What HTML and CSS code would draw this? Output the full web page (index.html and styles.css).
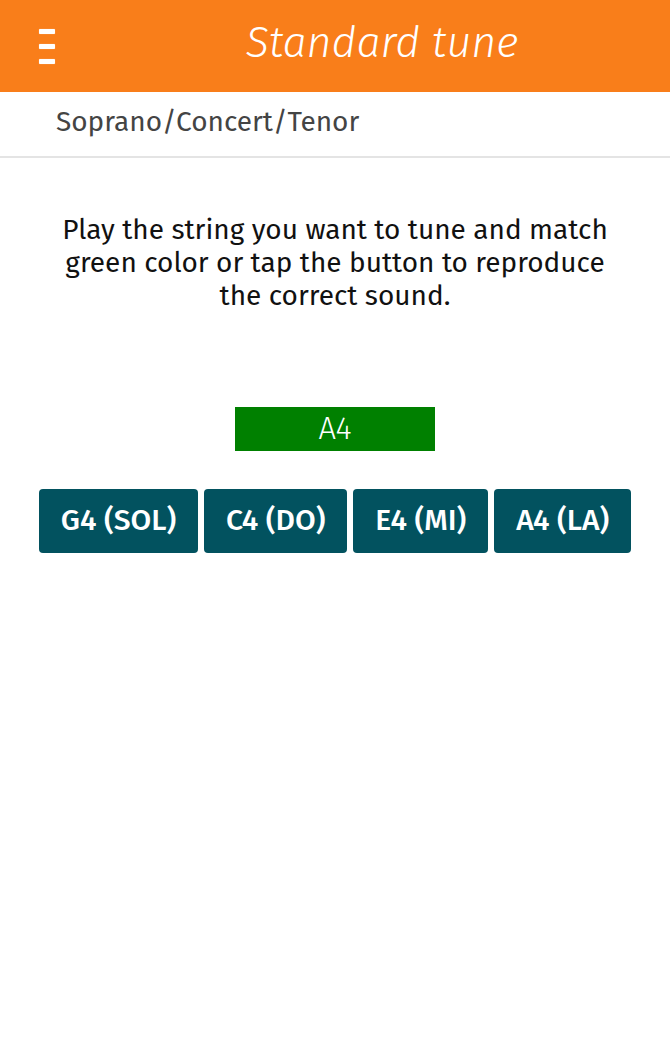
FILE: index.html
```html
<!DOCTYPE html>
<html lang="en">
<head>
<meta charset="utf-8">
<title>Standard tune</title>
<link rel="stylesheet" href="styles.css">
</head>
<body>
<header class="topbar">
  <button class="menu" aria-label="Menu">
    <span class="bar"></span><span class="bar"></span><span class="bar"></span>
  </button>
  <h1 class="title">Standard tune</h1>
</header>
<div class="subbar">Soprano/Concert/Tenor</div>
<main class="content">
  <p class="hint">Play the string you want to tune and match green color or tap the button to reproduce the correct sound.</p>
  <div class="note-wrap"><div class="note">A4</div></div>
  <div class="strings">
    <button class="string">G4 (SOL)</button>
    <button class="string">C4 (DO)</button>
    <button class="string">E4 (MI)</button>
    <button class="string">A4 (LA)</button>
  </div>
</main>
</body>
</html>
```
FILE: styles.css
```css
* { box-sizing: border-box; }
html, body { margin: 0; padding: 0; background: #fff; }
body { font-family: "Fira Sans", "Open Sans", "Noto Sans", sans-serif; color: #111; }

.topbar {
  height: 92px;
  background: #f97e1a;
  display: flex;
  align-items: center;
}
.menu {
  width: 94px;
  height: 92px;
  border: 0;
  background: transparent;
  padding: 0 0 0 39px;
  display: flex;
  flex-direction: column;
  justify-content: center;
  gap: 10px;
}
.bar { display: block; width: 16px; height: 5px; background: #fff; border-radius: 1px; box-shadow: 0 0 1px rgba(255,255,255,0.6); }
.title {
  margin: -7px 0 0;
  flex: 1;
  text-align: center;
  color: #fff;
  font-weight: 300;
  font-style: italic;
  font-size: 43px;
}

.subbar {
  height: 66px;
  border-bottom: 2px solid #e4e4e4;
  padding: 0 0 5px 56px;
  display: flex;
  align-items: center;
  font-size: 28px;
  color: #444;
}

.content { padding: 0 50px; }
.hint {
  margin: 55px 0 0;
  text-align: center;
  font-size: 28px;
  line-height: 33px;
  color: #111;
}
.note-wrap { display: flex; justify-content: center; margin-top: 95px; }
.note {
  width: 200px;
  height: 44px;
  background: #008000;
  color: #fff;
  font-weight: 300;
  font-size: 31px;
  line-height: 44px;
  text-align: center;
}
.strings {
  display: flex;
  justify-content: center;
  gap: 6px;
  margin: 38px -40px 0;
}
.string {
  height: 64px;
  border: 0;
  border-radius: 4px;
  background: #02525f;
  color: #fff;
  font-family: inherit;
  font-weight: 500;
  font-size: 30px;
  padding: 0 22px 2px;
}
```
